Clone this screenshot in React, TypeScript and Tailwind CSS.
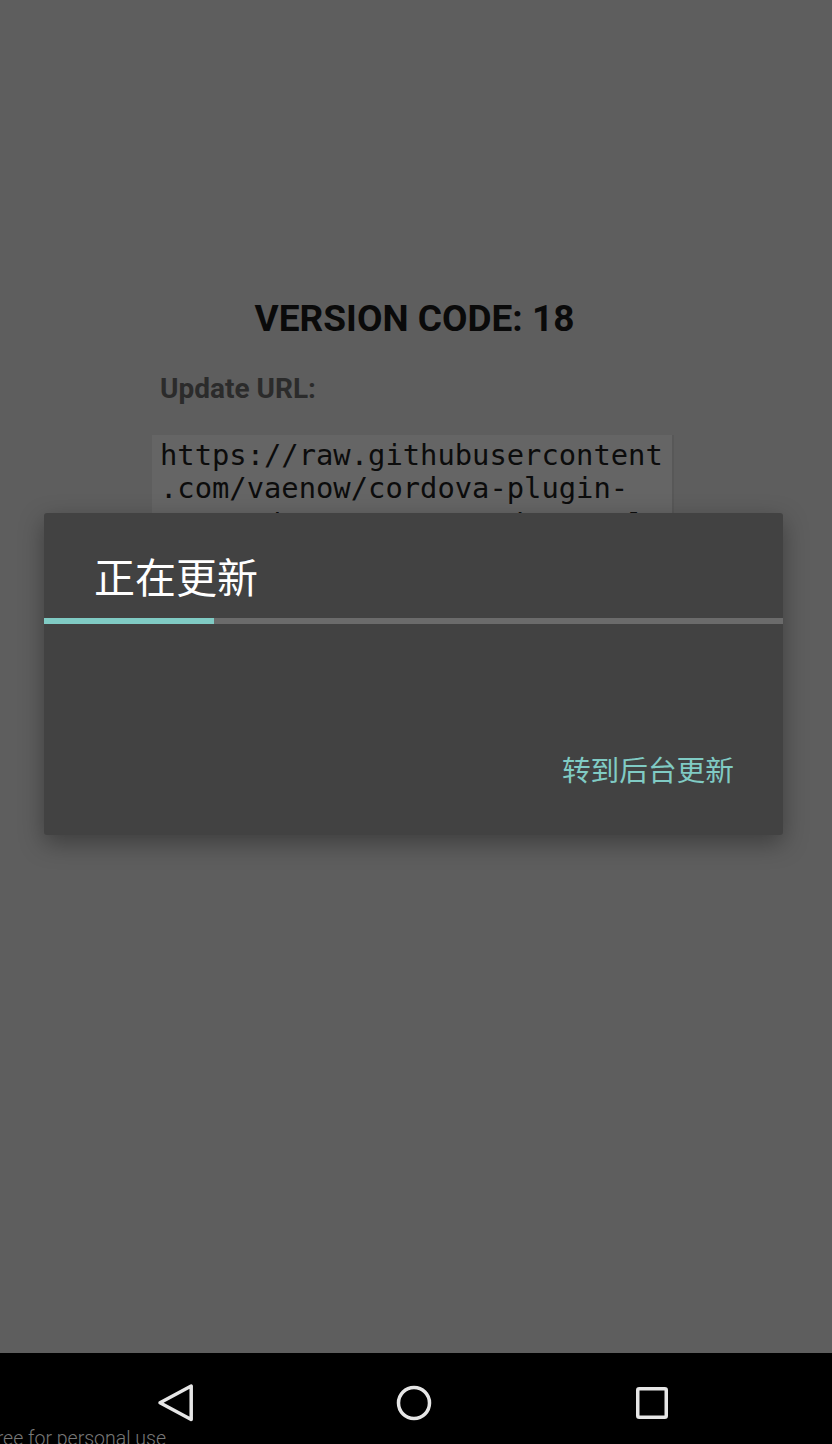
import React from "react";

export default function App() {
  return (
    <div className="relative w-[832px] h-[1444px] overflow-hidden bg-[#5e5e5e] flex flex-col" style={{ fontFamily: "Roboto, 'Noto Sans CJK SC', sans-serif" }}>
      <div className="flex-1 flex flex-col items-center pt-[296px]">
        <h1 className="text-[37px] leading-[46px] font-bold text-[#0a0a0a] text-center w-full pr-[3px]">VERSION CODE: 18</h1>
        <div className="w-[522px] ml-[-6px] mt-[29px]">
          <div className="text-[28px] leading-[36px] font-bold text-[#2b2b2b] pl-[8px]">Update URL:</div>
          <div className="mt-[28px] bg-[#656565] border-r-2 border-[#585858] pl-[8px] pt-[4px] pb-[10px] text-[28.8px] leading-[33px] text-[#0c0c0c]" style={{ fontFamily: "'DejaVu Sans Mono', monospace" }}>
            <div>https://raw.githubusercontent</div>
            <div>.com/vaenow/cordova-plugin-</div>
            <div className="mt-[3px]">app-update/master/update.xml</div>
          </div>
        </div>
      </div>

      <div className="absolute left-[44px] top-[513px] w-[739px] h-[322px] bg-[#424242] rounded-[3px] shadow-[0_8px_24px_rgba(0,0,0,0.35)] flex flex-col">
        <div className="h-[105px] flex items-center pl-[50px] pt-[18px] text-[41px] text-white leading-[48px]" style={{ fontFamily: "'Noto Sans CJK SC', sans-serif" }}>正在更新</div>
        <div className="h-[6px] bg-[#6b6b6b] flex">
          <div className="w-[170px] h-full bg-[#80cbc4]" />
        </div>
        <div className="flex-1 flex items-end justify-end pr-[49px] pb-[49px]">
          <span className="text-[28.7px] leading-[34px] text-[#80cbc4]" style={{ fontFamily: "'Noto Sans CJK SC', sans-serif" }}>转到后台更新</span>
        </div>
      </div>

      <div className="h-[91px] bg-black relative">
        <div className="flex items-start pt-[25px] pl-[151px] gap-[188px]">
          <svg width="50" height="50" viewBox="0 0 50 50">
            <path d="M40.2 8 L40.2 41.5 L9 24.75 Z" fill="none" stroke="#e6e6e6" strokeWidth="3.5" strokeLinejoin="round" />
          </svg>
          <svg width="50" height="50" viewBox="0 0 50 50">
            <circle cx="25" cy="25" r="15.5" fill="none" stroke="#e6e6e6" strokeWidth="3.5" />
          </svg>
          <svg width="50" height="50" viewBox="0 0 50 50">
            <rect x="10.75" y="10.75" width="28.5" height="28.5" rx="1.5" fill="none" stroke="#e6e6e6" strokeWidth="3.5" />
          </svg>
        </div>
        <div className="absolute left-[-14px] bottom-[-7px] text-[19.5px] leading-[24px] text-[#777] font-light" style={{ fontFamily: "Roboto, sans-serif" }}>Free for personal use</div>
      </div>
    </div>
  );
}
